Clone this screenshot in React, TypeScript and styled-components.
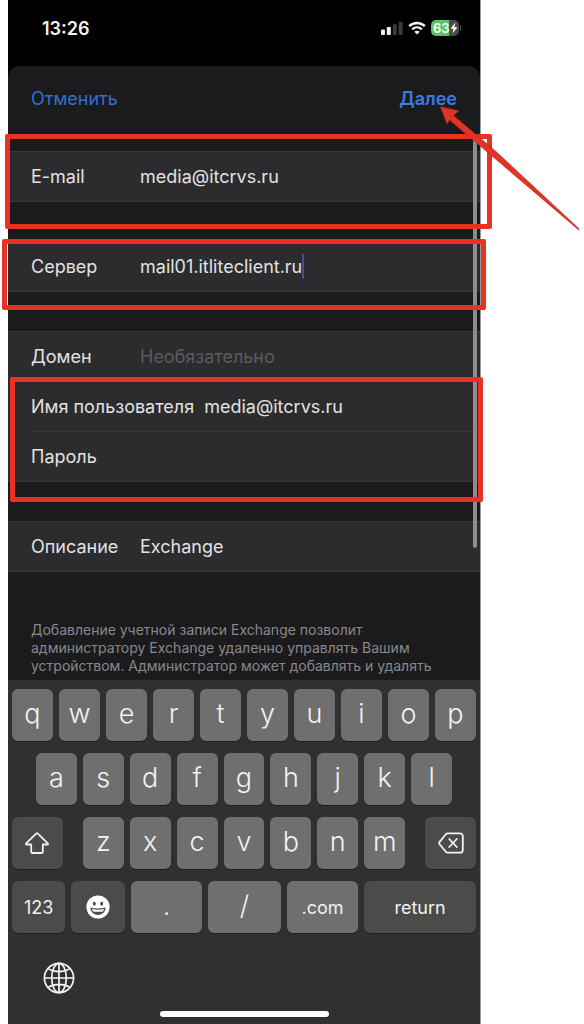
import React from "react";
import styled, { createGlobalStyle } from "styled-components";

const font = `Inter, "Noto Sans", "Liberation Sans", sans-serif`;

const GlobalStyle = createGlobalStyle`
  * { box-sizing: border-box; }
  body { margin: 0; background: #fff; font-family: ${font}; }
  button, input { font-family: inherit; margin: 0; }
`;

const Page = styled.div`
  position: relative;
  min-height: 100vh;
  padding: 0 103px 0 8px;
  overflow: hidden;
`;

const Phone = styled.main`
  min-height: 100vh;
  display: flex;
  flex-direction: column;
  background: #000;
  border-right: 1px solid #9a9a9a;
`;

const StatusBar = styled.header`
  height: 66px;
  padding: 0 19px 10px 34px;
  display: flex;
  align-items: center;
  justify-content: space-between;
  color: #f4f4f4;
`;

const Time = styled.time`
  font-size: 18px;
  font-weight: 600;
`;

const StatusIcons = styled.div`
  display: flex;
  align-items: center;
  gap: 5px;
`;

const Battery = styled.span`
  position: relative;
  width: 28px;
  height: 16px;
  padding-left: 2px;
  margin-right: 2px;
  display: flex;
  align-items: center;
  border-radius: 5px;
  background: linear-gradient(90deg, #5cc466 63%, #4b4b4b 63%);
  color: #fff;
  font-size: 13px;
  font-weight: 600;

  &::after {
    content: "";
    position: absolute;
    right: -2px;
    top: 5px;
    width: 1px;
    height: 6px;
    background: #4b4b4b;
  }
`;

const Sheet = styled.form`
  position: relative;
  flex: 1;
  background: #1b1b1d;
  border-radius: 12px 12px 0 0;
`;

const NavBar = styled.nav`
  height: 65px;
  padding: 0 23px;
  display: flex;
  align-items: center;
  justify-content: space-between;
`;

const NavButton = styled.button<{ $strong?: boolean }>`
  padding: 0;
  border: 0;
  background: none;
  color: ${(p) => (p.$strong ? "#3a7be4" : "#2f70d0")};
  font-size: 18px;
  font-weight: ${(p) => (p.$strong ? 600 : 400)};
`;

const Groups = styled.div`
  padding-top: 20px;
  display: flex;
  flex-direction: column;
  gap: 39px;
`;

const Group = styled.section`
  position: relative;
  padding-left: 23px;
  background: #2c2c2e;
  border: solid #38383a;
  border-width: 1px 0;
`;

const Row = styled.div`
  height: 49px;
  display: flex;
  align-items: center;
  gap: 10px;
  color: #e2e2e2;
  font-size: 18px;

  & + & {
    height: 50px;
    border-top: 1px solid #38383a;
  }
`;

const Label = styled.label`
  min-width: 99px;
  white-space: nowrap;
`;

const Input = styled.input<{ $focused?: boolean }>`
  ${(p) => (p.$focused ? "field-sizing: content;" : "flex: 1;")}
  min-width: 0;
  padding: 0;
  border: 0;
  outline: 0;
  background: none;
  color: inherit;
  font-size: 18px;

  &::placeholder {
    color: #5b5b5e;
    opacity: 1;
  }
`;

const Caret = styled.span`
  width: 2px;
  height: 25px;
  margin-left: -10px;
  background: #3f4fa0;
`;

const Highlight = styled.span<{ $inset: string }>`
  position: absolute;
  z-index: 2;
  inset: ${(p) => p.$inset};
  border: 5px solid #ea3223;
  border-radius: 2px;
  pointer-events: none;
`;

const Scrollbar = styled.span`
  position: absolute;
  z-index: 1;
  top: 70px;
  right: 3px;
  width: 4px;
  height: 412px;
  border-radius: 2px;
  background: #8d8d8f;
`;

const Note = styled.p`
  margin: 0;
  padding: 49px 23px 5px;
  color: #88888b;
  font-size: 14px;
  line-height: 18px;
`;

const Keyboard = styled.section`
  padding: 9px 4px 0;
  background: #303030;
`;

const KeyRows = styled.div`
  display: flex;
  flex-direction: column;
  gap: 12px;
`;

const KeyRow = styled.div<{ $columns: string; $gap?: number; $inset?: string }>`
  display: grid;
  grid-template-columns: ${(p) => p.$columns};
  gap: ${(p) => p.$gap ?? 6}px;
  padding: 0 ${(p) => p.$inset ?? "0"};
`;

const Key = styled.button<{ $dark?: boolean; $small?: boolean }>`
  min-width: 0;
  height: 52px;
  padding: 0 0 ${(p) => (p.$small ? 0 : 4)}px;
  display: flex;
  align-items: center;
  justify-content: center;
  border: 0;
  border-radius: 6px;
  background: ${(p) => (p.$dark ? "#4b4b49" : "#6f6f6f")};
  box-shadow: 0 1px 0 #1e1e1e;
  color: #f2f2f2;
  font-size: ${(p) => (p.$small ? 18 : 27)}px;
  font-weight: ${(p) => (p.$small ? 400 : 300)};
`;

const KeyboardFooter = styled.footer`
  padding: 29px 31px 9px;
`;

const GlobeButton = styled.button`
  display: block;
  padding: 0;
  border: 0;
  background: none;
`;

const HomeIndicator = styled.div`
  width: 169px;
  height: 6px;
  margin: 14px auto 0;
  border-radius: 3px;
  background: #fff;
`;

const Arrow = styled.svg`
  position: absolute;
  z-index: 3;
  top: 106px;
  right: 3px;
`;

const SignalIcon = () => (
  <svg width="22" height="14" viewBox="0 0 22 14" aria-hidden="true">
    <rect x="0" y="8.5" width="4" height="5.5" rx="1" fill="#f4f4f4" />
    <rect x="5.8" y="6" width="4" height="8" rx="1" fill="#f4f4f4" />
    <rect x="11.8" y="3.2" width="4" height="10.8" rx="1" fill="#3a3a3a" />
    <rect x="17.6" y="0.8" width="4" height="13.2" rx="1" fill="#3a3a3a" />
  </svg>
);

const WifiIcon = () => (
  <svg width="18" height="14" viewBox="0 0 18 14" fill="none" aria-hidden="true">
    <path d="M1.2 5.2C5.6.9 12.4.9 16.8 5.2" stroke="#f4f4f4" strokeWidth="2.5" />
    <path d="M4.2 8.3C7 5.7 11 5.7 13.8 8.3" stroke="#f4f4f4" strokeWidth="2.4" />
    <path d="M9 13.6 6.3 10.8C7.9 9.5 10.1 9.5 11.7 10.8Z" fill="#f4f4f4" />
  </svg>
);

const BoltIcon = () => (
  <svg width="8" height="12" viewBox="0 0 8 12" aria-hidden="true">
    <path d="M5.4.6.6 6.7h2.9L2.5 11.4 7.4 5.2H4.4Z" fill="#fff" />
  </svg>
);

const ShiftIcon = () => (
  <svg width="26" height="24" viewBox="0 0 26 24" fill="none" aria-hidden="true">
    <path
      d="M12.4 2.3a.8.8 0 0 1 1.2 0l10.2 10c.6.6.3 1.2-.4 1.2h-4.6v7.2c0 .9-.4 1.3-1.3 1.3h-9c-.9 0-1.3-.4-1.3-1.3v-7.2H2.600c-.7 0-1-.6-.4-1.2Z"
      stroke="#f2f2f2"
      strokeWidth="1.8"
      strokeLinejoin="round"
    />
  </svg>
);

const DeleteIcon = () => (
  <svg width="26" height="22" viewBox="0 0 26 22" fill="none" stroke="#f2f2f2" strokeWidth="1.8" strokeLinecap="round" strokeLinejoin="round" aria-hidden="true">
    <path d="M9.8 1.4h12.3a2.7 2.7 0 0 1 2.7 2.7v13.8a2.7 2.7 0 0 1-2.7 2.7H9.8c-.8 0-1.4-.3-1.9-.8L1.6 12.2a1.6 1.6 0 0 1 0-2.3L7.9 2.2c.5-.5 1.1-.8 1.9-.8Z" />
    <path d="m11.2 7 7.6 8M18.8 7l-7.6 8" />
  </svg>
);

const EmojiIcon = () => (
  <svg width="24" height="24" viewBox="0 0 24 24" aria-hidden="true">
    <circle cx="12" cy="12" r="11.6" fill="#fff" />
    <ellipse cx="8.3" cy="8.7" rx="1.5" ry="1.9" fill="#4b4b49" />
    <ellipse cx="15.7" cy="8.7" rx="1.5" ry="1.9" fill="#4b4b49" />
    <path d="M4.4 12.6c4.8 1.3 10.4 1.3 15.2 0 .2 4-3.2 7.3-7.6 7.3s-7.8-3.3-7.6-7.3Z" fill="#4b4b49" />
    <path d="M5.9 14.1c4 .9 8.2.9 12.2 0-.3 1-.7 1.7-1.2 2.3-3.2.6-6.6.6-9.8 0-.5-.6-.9-1.3-1.2-2.3Z" fill="#fff" />
  </svg>
);

const GlobeIcon = () => (
  <svg width="32" height="32" viewBox="0 0 32 32" fill="none" stroke="#f4f4f4" strokeWidth="1.7" aria-hidden="true">
    <circle cx="16" cy="16" r="14.6" />
    <ellipse cx="16" cy="16" rx="7.3" ry="14.6" />
    <path d="M16 1.4v29.2M1.4 16h29.2M5 6.6c6.200 4 15.800 4 22 0M5 25.400c6.200-4 15.800-4 22 0" />
  </svg>
);

const letters = (row: string) => row.split("").map((c) => <Key type="button" key={c}>{c}</Key>);

interface FieldProps {
  id: string;
  label: string;
  value?: string;
  placeholder?: string;
  type?: string;
  focused?: boolean;
}

const Field = ({ id, label, value = "", placeholder, type = "text", focused }: FieldProps) => (
  <Row>
    <Label htmlFor={id}>{label}</Label>
    <Input id={id} type={type} defaultValue={value} placeholder={placeholder} $focused={focused} spellCheck={false} />
    {focused && <Caret />}
  </Row>
);

export default function App() {
  return (
    <Page>
      <GlobalStyle />
      <Phone>
        <StatusBar>
          <Time>13:26</Time>
          <StatusIcons>
            <SignalIcon />
            <WifiIcon />
            <Battery>
              63
              <BoltIcon />
            </Battery>
          </StatusIcons>
        </StatusBar>

        <Sheet>
          <NavBar>
            <NavButton type="button">Отменить</NavButton>
            <NavButton type="button" $strong>Далее</NavButton>
          </NavBar>
          <Groups>
            <Group>
              <Field id="email" label="E-mail" value="media@itcrvs.ru" />
              <Highlight $inset="-18px -12px -28px -3px" />
            </Group>
            <Group>
              <Field id="server" label="Сервер" value="mail01.itliteclient.ru" focused />
              <Highlight $inset="-3px -6px -19px -6px" />
            </Group>
            <Group>
              <Field id="domain" label="Домен" placeholder="Необязательно" />
              <Field id="user" label="Имя пользователя" value="media@itcrvs.ru" />
              <Field id="password" label="Пароль" type="password" />
              <Highlight $inset="45px -3px -21px 2px" />
            </Group>
            <Group>
              <Field id="description" label="Описание" value="Exchange" />
            </Group>
          </Groups>
          <Note>
            Добавление учетной записи Exchange позволит администратору Exchange удаленно управлять
            Вашим устройством. Администратор может добавлять и удалять
          </Note>
          <Scrollbar />
        </Sheet>

        <Keyboard aria-label="Клавиатура">
          <KeyRows>
            <KeyRow $columns="repeat(10, 1fr)">{letters("qwertyuiop")}</KeyRow>
            <KeyRow $columns="repeat(9, 1fr)" $inset="24px">{letters("asdfghjkl")}</KeyRow>
            <KeyRow $columns="51fr 323fr 51fr" $gap={20}>
              <Key type="button" $dark $small aria-label="Shift"><ShiftIcon /></Key>
              <KeyRow $columns="repeat(7, 1fr)">{letters("zxcvbnm")}</KeyRow>
              <Key type="button" $dark $small aria-label="Delete"><DeleteIcon /></Key>
            </KeyRow>
            <KeyRow $columns="53fr 53fr 71fr 72fr 71fr 111fr">
              <Key type="button" $dark $small>123</Key>
              <Key type="button" $dark $small aria-label="Emoji"><EmojiIcon /></Key>
              <Key type="button">.</Key>
              <Key type="button">/</Key>
              <Key type="button" $small>.com</Key>
              <Key type="button" $dark $small>return</Key>
            </KeyRow>
          </KeyRows>
          <KeyboardFooter>
            <GlobeButton type="button" aria-label="Language"><GlobeIcon /></GlobeButton>
            <HomeIndicator />
          </KeyboardFooter>
        </Keyboard>
      </Phone>

      <Arrow width="142" height="126" viewBox="0 0 142 126" aria-hidden="true">
        <path
          d="M1.3 .7 19.7 4.8 14.6 9.6 57 45.5 140.3 123 139.5 123.8 53 50 10.5 14 8 18Z"
          fill="#e23325"
          stroke="#a8281d"
          strokeWidth=".6"
        />
      </Arrow>
    </Page>
  );
}
